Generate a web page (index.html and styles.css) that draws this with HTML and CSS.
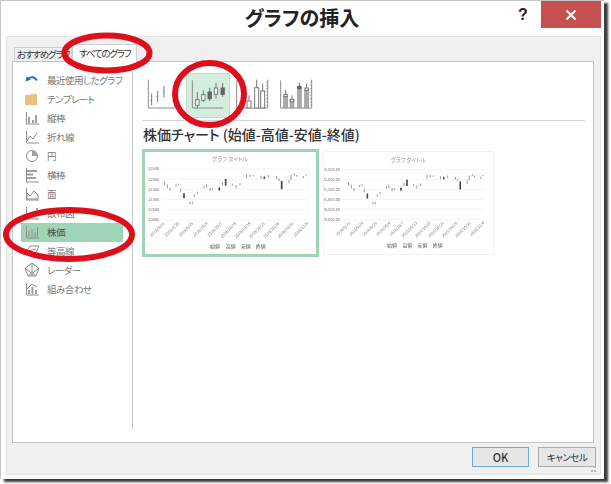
FILE: index.html
```html
<!DOCTYPE html>
<html lang="ja">
<head>
    <meta charset="UTF-8">
    <title>グラフの挿入</title>
    <link rel="stylesheet" href="styles.css">
</head>
<body>
    <svg class="defs" width="0" height="0">
        <defs>
            <g id="candles">
                <path class="candle-wick" d="M88 110V122M97 118V130M105 128V138M123 118V126M130 116V122M137 130V142M165 170V178M172 170V178M178 148V156M187 140V147M207 122V130M215 118V128M225 128V138M232 128V135M253 125V138M262 112V122M292 116V122M303 120V130M315 114V122M335 88V100M345 88V96M355 90V94M378 92V102M388 94V102M400 90V98M425 94V102M432 100V108M462 105V115M468 90V105M478 85V92M485 90V95M505 93V100M512 88V92"/>
                <path class="candle-body" d="M147 145V160M272 102V122M440 108V133M253 128V136M388 95V101"/>
            </g>
            <g id="grid">
                <path class="chart-grid" d="M0 72H600M0 103H600M0 133H600M0 163H600M0 193H600M0 225H600"/>
            </g>
        </defs>
    </svg>

    <div class="window">
        <div class="titlebar">
            <div class="titlebar__title">グラフの挿入</div>
            <div class="titlebar__help">?</div>
            <div class="titlebar__close">
                <svg width="14" height="14" viewBox="0 0 14 14"><path d="M2.5 2.5L11.5 11.5M11.5 2.5L2.5 11.5"/></svg>
            </div>
        </div>

        <div class="dialog">
            <div class="tabs">
                <div class="tabs__item">おすすめグラフ</div>
                <div class="tabs__item tabs__item_active">すべてのグラフ</div>
            </div>

            <div class="panel">
                <div class="side-list">
                    <div class="side-list__item">
                        <svg class="side-icon" viewBox="0 0 16 16"><path class="i-blue" d="M1.5 9.5L2.5 4.5L7 7.5Z"/><path class="i-blue-line" d="M4 7C7 4.5 10.500 4.500 13 8.500"/></svg>
                        <span>最近使用したグラフ</span>
                    </div>
                    <div class="side-list__item">
                        <svg class="side-icon" viewBox="0 0 16 16"><path class="i-folder" d="M1 4H6L7 3H13V14H1Z"/></svg>
                        <span>テンプレート</span>
                    </div>
                    <div class="side-list__item">
                        <svg class="side-icon" viewBox="0 0 16 16"><path class="i-line" d="M2.500 2V14H15"/><path class="i-fill" d="M4 7H6V13H4ZM8 10H10V13H8ZM11 5H13V13H11Z"/></svg>
                        <span>縦棒</span>
                    </div>
                    <div class="side-list__item">
                        <svg class="side-icon" viewBox="0 0 16 16"><path class="i-line" d="M2.500 2V14H15M3 12L6 7L9 10L13 4"/></svg>
                        <span>折れ線</span>
                    </div>
                    <div class="side-list__item">
                        <svg class="side-icon" viewBox="0 0 16 16"><circle class="i-line" cx="8" cy="8" r="5.500"/><path class="i-fill" d="M8 8V2.500A5.500 5.500 0 0 1 13.500 8Z"/></svg>
                        <span>円</span>
                    </div>
                    <div class="side-list__item">
                        <svg class="side-icon" viewBox="0 0 16 16"><path class="i-line" d="M2.500 1V15H15"/><path class="i-fill" d="M3 3H13V5H3ZM3 6.500H9V8.500H3ZM3 10H12V12H3Z"/></svg>
                        <span>横棒</span>
                    </div>
                    <div class="side-list__item">
                        <svg class="side-icon" viewBox="0 0 16 16"><path class="i-line" d="M2.500 2V14H15M3 7L6 10L10 5L14 9V13H3Z"/></svg>
                        <span>面</span>
                    </div>
                    <div class="side-list__item">
                        <svg class="side-icon" viewBox="0 0 16 16"><path class="i-line" d="M2.500 2V14H15"/><path class="i-fill" d="M5 9H7V11H5ZM9 6H11V8H9ZM12 3H14V5H12Z"/></svg>
                        <span>散布図</span>
                    </div>
                    <div class="side-list__item side-list__item_active">
                        <svg class="side-icon" viewBox="0 0 16 16"><path class="i-line" d="M2.500 2V14H15M5 7V13M8 5V13M11 8V13M13.500 3V13"/><path class="i-fill" d="M4 9H6V12H4ZM10 9H12V12H10Z"/></svg>
                        <span>株価</span>
                    </div>
                    <div class="side-list__item">
                        <svg class="side-icon" viewBox="0 0 16 16"><path class="i-line" d="M1 11L6 3H15L11 12H2ZM5 8L12 6M4 10H10"/></svg>
                        <span>等高線</span>
                    </div>
                    <div class="side-list__item">
                        <svg class="side-icon" viewBox="0 0 16 16"><path class="i-line" d="M8 1L15 6.500L12 14H4L1 6.500ZM8 1V14M1 6.500L12 14M15 6.500L4 14"/></svg>
                        <span>レーダー</span>
                    </div>
                    <div class="side-list__item">
                        <svg class="side-icon" viewBox="0 0 16 16"><path class="i-line" d="M2.500 2V14H15M3 8L8 3L13 6"/><path class="i-fill" d="M4 9H6V13H4ZM7.500 6H9.500V13H7.500ZM11 9H13V13H11Z"/></svg>
                        <span>組み合わせ</span>
                    </div>
                </div>

                <div class="main">
                    <div class="subtypes">
                        <div class="subtypes__item">
                            <svg class="subtype-icon" viewBox="6 18 132 135">
                                <path class="si-axis" d="M25 38V123H105"/>
                                <path class="si-line" d="M35 80V115M53 72V105M72 57V92M108 55V85"/>
                                <path class="si-tick" d="M31 100H35M49 88H53M68 75H72M104 70H108"/>
                            </svg>
                        </div>
                        <div class="subtypes__item subtypes__item_active">
                            <svg class="subtype-icon" viewBox="138 18 132 135">
                                <path class="si-axis" d="M157 40V123H250"/>
                                <path class="si-line" d="M172 75V125M190 70V105M209 62V102M228 48V95M248 48V90"/>
                                <rect class="si-white" x="167" y="98" width="10" height="17"/>
                                <rect class="si-white" x="185" y="83" width="10" height="17"/>
                                <rect class="si-dark" x="204" y="75" width="10" height="20"/>
                                <rect class="si-white" x="223" y="63" width="10" height="19"/>
                                <rect class="si-dark" x="243" y="63" width="10" height="19"/>
                            </svg>
                        </div>
                        <div class="subtypes__item">
                            <svg class="subtype-icon" viewBox="270 18 132 135">
                                <path class="si-axis" d="M290 40V123H383V38"/>
                                <path class="si-tick" d="M379 45H383M379 55H383M379 65H383M379 75H383M379 85H383M379 95H383M379 105H383M379 115H383"/>
                                <path class="si-line" d="M327 85V100M350 38V62M368 50V72"/>
                                <rect class="si-white" x="321" y="102" width="12" height="21"/>
                                <rect class="si-white" x="344" y="62" width="12" height="61"/>
                                <rect class="si-white" x="362" y="72" width="12" height="51"/>
                            </svg>
                        </div>
                        <div class="subtypes__item">
                            <svg class="subtype-icon" viewBox="402 18 132 135">
                                <path class="si-axis" d="M422 40V123H515V38"/>
                                <path class="si-tick" d="M511 45H515M511 55H515M511 65H515M511 75H515M511 85H515M511 95H515M511 105H515M511 115H515"/>
                                <path class="si-line" d="M437 68V90M456 85V97M478 47V60M500 50V66"/>
                                <rect class="si-grey" x="431" y="88" width="12" height="35"/>
                                <rect class="si-grey" x="450" y="97" width="12" height="26"/>
                                <rect class="si-grey" x="472" y="60" width="12" height="63"/>
                                <rect class="si-grey" x="494" y="68" width="12" height="55"/>
                                <rect class="si-white" x="432" y="82" width="10" height="7"/>
                                <rect class="si-white" x="451" y="97" width="10" height="7"/>
                                <rect class="si-dark" x="473" y="58" width="10" height="7"/>
                                <rect class="si-white" x="495" y="63" width="10" height="7"/>
                            </svg>
                        </div>
                    </div>

                    <h2 class="main__title">株価チャート (始値-高値-安値-終値)</h2>

                    <div class="thumbs">
                        <div class="thumb thumb_active">
                            <svg class="chart" viewBox="30 21 513 306">
                                <text class="chart-title" x="285" y="48">グラフ タイトル</text>
                                <svg x="80" y="0" width="440" height="300" viewBox="0 0 440 300"><use href="#grid"/></svg>
                                <use href="#candles"/>
                                <g class="chart-y" text-anchor="end">
                                    <text x="73" y="76">22500</text>
                                    <text x="73" y="107">22000</text>
                                    <text x="73" y="137">21500</text>
                                    <text x="73" y="167">21000</text>
                                    <text x="73" y="197">20500</text>
                                    <text x="73" y="229">20000</text>
                                </g>
                                <g class="chart-x" text-anchor="end">
                                    <text transform="translate(90 236) rotate(-45)">2016/9/21</text>
                                    <text transform="translate(133 236) rotate(-45)">2016/9/26</text>
                                    <text transform="translate(176 236) rotate(-45)">2016/9/29</text>
                                    <text transform="translate(219 236) rotate(-45)">2016/10/4</text>
                                    <text transform="translate(262 236) rotate(-45)">2016/10/7</text>
                                    <text transform="translate(305 236) rotate(-45)">2016/10/13</text>
                                    <text transform="translate(348 236) rotate(-45)">2016/10/18</text>
                                    <text transform="translate(391 236) rotate(-45)">2016/10/21</text>
                                    <text transform="translate(434 236) rotate(-45)">2016/10/26</text>
                                    <text transform="translate(477 236) rotate(-45)">2016/10/31</text>
                                    <text transform="translate(520 236) rotate(-45)">2016/11/4</text>
                                </g>
                                <g class="chart-legend">
                                    <text x="225" y="310">始値</text>
                                    <text x="272" y="310">高値</text>
                                    <text x="317" y="310">安値</text>
                                    <text x="362" y="310">終値</text>
                                </g>
                            </svg>
                        </div>
                        <div class="thumb">
                            <svg class="chart" viewBox="9 18 513 312">
                                <text class="chart-title" x="265" y="48">グラフ タイトル</text>
                                <svg x="60" y="0" width="440" height="300" viewBox="0 0 440 300"><use href="#grid"/></svg>
                                <g transform="translate(-3 0) scale(.97 1)"><use href="#candles"/></g>
                                <g class="chart-y" text-anchor="end">
                                    <text x="56" y="76">22,500.00</text>
                                    <text x="56" y="107">22,000.00</text>
                                    <text x="56" y="137">21,500.00</text>
                                    <text x="56" y="167">21,000.00</text>
                                    <text x="56" y="197">20,500.00</text>
                                    <text x="56" y="229">20,000.00</text>
                                </g>
                                <g class="chart-x" text-anchor="end">
                                    <text transform="translate(88 236) rotate(-45)">2016/9/21</text>
                                    <text transform="translate(129 236) rotate(-45)">2016/9/26</text>
                                    <text transform="translate(170 236) rotate(-45)">2016/9/29</text>
                                    <text transform="translate(211 236) rotate(-45)">2016/10/4</text>
                                    <text transform="translate(252 236) rotate(-45)">2016/10/7</text>
                                    <text transform="translate(293 236) rotate(-45)">2016/10/13</text>
                                    <text transform="translate(334 236) rotate(-45)">2016/10/18</text>
                                    <text transform="translate(375 236) rotate(-45)">2016/10/21</text>
                                    <text transform="translate(416 236) rotate(-45)">2016/10/26</text>
                                    <text transform="translate(457 236) rotate(-45)">2016/10/31</text>
                                    <text transform="translate(498 236) rotate(-45)">2016/11/4</text>
                                </g>
                                <g class="chart-legend">
                                    <text x="200" y="310">始値</text>
                                    <text x="247" y="310">高値</text>
                                    <text x="293" y="310">安値</text>
                                    <text x="340" y="310">終値</text>
                                </g>
                            </svg>
                        </div>
                    </div>
                </div>
            </div>

            <div class="footer">
                <button class="btn btn_default" type="button">OK</button>
                <button class="btn btn_cancel" type="button">キャンセル</button>
                <svg class="grip" width="5" height="6" viewBox="0 0 5 6"><path d="M3 0h2v2H3zM0 4h2v2H0zM3 4h2v2H3z"/></svg>
            </div>
        </div>
    </div>

    <svg class="marks" width="611" height="484" viewBox="0 0 611 484">
        <ellipse cx="107" cy="53" rx="42.500" ry="17.500"/>
        <ellipse cx="209.500" cy="94" rx="34.500" ry="31"/>
        <ellipse cx="69" cy="234.500" rx="63" ry="24.500"/>
    </svg>
</body>
</html>
```

FILE: styles.css
```css
* {
    box-sizing: border-box;
}
body {
    position: relative;
    width: 611px;
    height: 484px;
    margin: 0;
    overflow: hidden;
    background-color: #fff;
    font-family: "Noto Sans CJK JP", "Noto Sans", sans-serif;
    font-feature-settings: "palt";
    color: #555;
}
.defs {
    position: absolute;
}
.window {
    display: flex;
    flex-direction: column;
    width: 604px;
    height: 479px;
    padding: 0 3px 4px 5px;
    border: 1px solid #c6c6c6;
    border-right: 0;
    border-bottom: 0;
    background-color: #fff;
    box-shadow: 4px 3px 2px #3c3c3c;
}
.titlebar {
    display: flex;
    flex: none;
    align-items: flex-start;
    height: 35px;
}
.titlebar__title {
    flex: 1;
    padding-left: 88px;
    text-align: center;
    font-size: 20px;
    font-weight: 700;
    line-height: 33px;
    color: #222;
}
.titlebar__help {
    width: 31px;
    padding-right: 5px;
    text-align: center;
    font-family: "Liberation Sans", sans-serif;
    font-size: 16px;
    font-weight: 700;
    line-height: 28px;
    color: #222;
}
.titlebar__close {
    display: flex;
    align-items: center;
    justify-content: center;
    width: 60px;
    height: 27px;
    background-color: #c75050;
}
.titlebar__close path {
    fill: none;
    stroke: #fff;
    stroke-width: 2;
}

.dialog {
    display: flex;
    flex: 1;
    flex-direction: column;
    min-height: 0;
    padding: 7px 6px 0 5px;
    border: 1px solid #e4e4e4;
    background-color: #f0f0f0;
}
.tabs {
    display: flex;
    flex: none;
    align-items: flex-end;
    height: 17px;
    padding-left: 2px;
}
.tabs__item {
    width: 58px;
    height: 14px;
    padding-left: 2px;
    border: 1px solid #d0d0d0;
    border-bottom: 0;
    font-size: 9.500px;
    letter-spacing: -1.200px;
    line-height: 13px;
    white-space: nowrap;
    color: #333;
}
.tabs__item_active {
    position: relative;
    width: 65px;
    height: 18px;
    margin-bottom: -1px;
    padding-left: 6px;
    background-color: #fff;
    line-height: 17px;
}

.panel {
    display: flex;
    flex: none;
    height: 382px;
    border: 1px solid #c6c6c6;
    background-color: #fff;
}
.side-list {
    flex: none;
    width: 120px;
    margin: 9px 0 13px;
    padding-left: 8px;
    border-right: 1px solid #c6c6c6;
    font-size: 9.500px;
    letter-spacing: -.5px;
}
.side-list__item {
    display: flex;
    align-items: center;
    gap: 7px;
    width: 102px;
    height: 19px;
    padding-left: 3px;
    padding-bottom: 1px;
    white-space: nowrap;
    color: #777;
}
.side-list__item_active {
    background-color: #9fd5b7;
    color: #4a4a4a;
}
.side-icon {
    flex: none;
    width: 16px;
    height: 16px;
}
.i-line {
    fill: none;
    stroke: #8c8c8c;
    stroke-width: 1;
}
.i-fill {
    fill: #a0a0a0;
}
.i-blue {
    fill: #2b6cb0;
}
.i-blue-line {
    fill: none;
    stroke: #2b6cb0;
    stroke-width: 2;
}
.i-folder {
    fill: #e9c27f;
}

.main {
    flex: 1;
    min-width: 0;
    margin: 0 9px 0 10px;
    padding-top: 11px;
}
.subtypes {
    display: flex;
    height: 48px;
    margin-left: -1px;
    padding-bottom: 3px;
    border-bottom: 1px solid #d4d4d4;
    margin-right: -1px;
}
.subtypes__item {
    width: 44px;
    height: 45px;
}
.subtypes__item_active {
    background-color: #d3eedd;
    outline: 1px solid #bde2cb;
    outline-offset: -1px;
}
.subtype-icon {
    display: block;
    width: 44px;
    height: 45px;
}
.si-axis, .si-line, .si-tick {
    fill: none;
    stroke: #8c8c8c;
    stroke-width: 3;
}
.si-line {
    stroke: #777;
}
.si-white {
    fill: #fff;
    stroke: #777;
    stroke-width: 3;
}
.si-dark {
    fill: #666;
    stroke: #666;
    stroke-width: 3;
}
.si-grey {
    fill: #aaa;
    stroke: #999;
    stroke-width: 2;
}
.main__title {
    margin: 4px 0 6px;
    font-size: 14px;
    font-weight: 500;
    line-height: 18px;
    color: #333;
}

.thumbs {
    display: flex;
    align-items: flex-start;
    gap: 4px;
    margin-left: -1px;
}
.thumb {
    width: 171px;
    height: 104px;
    margin-top: 2px;
    border: 1px solid #f2f2f2;
}
.thumb_active {
    width: 177px;
    height: 108px;
    margin-top: 0;
    border: 3px solid #9fd5b7;
}
.chart {
    display: block;
    width: 100%;
    height: 100%;
    filter: blur(.3px);
}
.chart-title {
    font-size: 17px;
    fill: #999;
    text-anchor: middle;
}
.chart-grid {
    fill: none;
    stroke: #eee;
    stroke-width: 2;
}
.chart-y, .chart-x {
    font-size: 12px;
    fill: #777;
}
.chart-legend {
    font-size: 15px;
    fill: #555;
}
.candle-wick {
    fill: none;
    stroke: #666;
    stroke-width: 2;
}
.candle-body {
    fill: none;
    stroke: #444;
    stroke-width: 5;
}

.footer {
    position: relative;
    display: flex;
    flex: 1;
    justify-content: flex-end;
    gap: 9px;
    padding-top: 4px;
    margin-right: -2px;
}
.btn {
    width: 57px;
    height: 20px;
    padding: 0;
    border: 1px solid #acacac;
    background-color: #e6e6e6;
    font-family: inherit;
    font-feature-settings: "palt";
    font-size: 10px;
    line-height: 18px;
    color: #333;
}
.btn_default {
    border-color: #6ea8e0;
    font-size: 11px;
    font-weight: 500;
}
.btn_cancel {
    width: 58px;
    font-size: 9.500px;
    letter-spacing: -.5px;
}
.grip {
    position: absolute;
    right: 0;
    bottom: 2px;
    fill: #b5b5b5;
}

.marks {
    position: absolute;
    top: 0;
    left: 0;
    pointer-events: none;
}
.marks ellipse {
    fill: none;
    stroke: #de0f1d;
    stroke-width: 6;
}
```
